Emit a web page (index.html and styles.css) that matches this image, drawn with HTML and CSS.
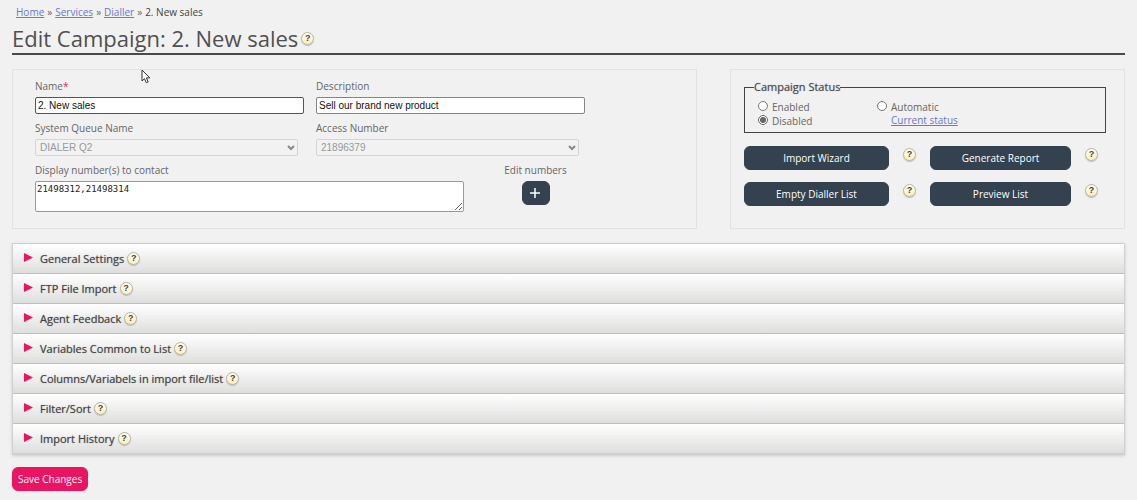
FILE: index.html
```html
<!DOCTYPE html>
<html lang="en">
<head>
<meta charset="utf-8">
<title>Edit Campaign</title>
<link rel="stylesheet" href="styles.css">
</head>
<body>
<nav class="breadcrumb"><a href="#">Home</a><span>»</span><a href="#">Services</a><span>»</span><a href="#">Dialler</a><span>»</span><span class="current">2. New sales</span></nav>
<header class="page-head">
  <h1>Edit Campaign: 2. New sales</h1>
  <button class="help" type="button">?</button>
</header>
<form class="campaign">
  <div class="panels">
    <section class="panel details-panel">
      <div class="field">
        <label for="name">Name<span class="required">*</span></label>
        <input class="text" id="name" type="text" value="2. New sales">
      </div>
      <div class="field">
        <label for="desc">Description</label>
        <input class="text light" id="desc" type="text" value="Sell our brand new product">
      </div>
      <div class="field">
        <label for="queue">System Queue Name</label>
        <div class="select-wrap">
          <select id="queue" disabled><option>DIALER Q2</option></select>
          <svg class="chevron" viewBox="0 0 8 6"><path d="M1 1l3 3 3-3"/></svg>
        </div>
      </div>
      <div class="field">
        <label for="access">Access Number</label>
        <div class="select-wrap">
          <select id="access" disabled><option>21896379</option></select>
          <svg class="chevron" viewBox="0 0 8 6"><path d="M1 1l3 3 3-3"/></svg>
        </div>
      </div>
      <div class="numbers">
        <div class="field">
          <label for="display">Display number(s) to contact</label>
          <textarea id="display">21498312,21498314</textarea>
        </div>
        <div class="edit-numbers">
          <label for="edit">Edit numbers</label>
          <button class="add" id="edit" type="button" aria-label="Edit numbers"><svg viewBox="0 0 12 12"><path d="M6 1v10M1 6h10"/></svg></button>
        </div>
      </div>
    </section>
    <section class="panel">
      <fieldset class="status">
        <legend>Campaign Status</legend>
        <div class="status-grid">
          <div class="radio"><input type="radio" name="status" id="enabled"><label for="enabled">Enabled</label></div>
          <div class="radio"><input type="radio" name="status" id="automatic"><label for="automatic">Automatic</label></div>
          <div class="radio"><input type="radio" name="status" id="disabled" checked><label for="disabled">Disabled</label></div>
          <a class="status-link" href="#">Current status</a>
        </div>
      </fieldset>
      <div class="actions">
        <button class="action" type="button">Import Wizard</button>
        <button class="help" type="button">?</button>
        <button class="action" type="button">Generate Report</button>
        <button class="help" type="button">?</button>
        <button class="action" type="button">Empty Dialler List</button>
        <button class="help" type="button">?</button>
        <button class="action" type="button">Preview List</button>
        <button class="help" type="button">?</button>
      </div>
    </section>
  </div>
  <div class="accordion">
    <details><summary><svg class="arrow" viewBox="0 0 9 9"><path d="M0 0l9 4.500L0 9z"/></svg><span>General Settings</span><button class="help" type="button">?</button></summary></details>
    <details><summary><svg class="arrow" viewBox="0 0 9 9"><path d="M0 0l9 4.500L0 9z"/></svg><span>FTP File Import</span><button class="help" type="button">?</button></summary></details>
    <details><summary><svg class="arrow" viewBox="0 0 9 9"><path d="M0 0l9 4.500L0 9z"/></svg><span>Agent Feedback</span><button class="help" type="button">?</button></summary></details>
    <details><summary><svg class="arrow" viewBox="0 0 9 9"><path d="M0 0l9 4.500L0 9z"/></svg><span>Variables Common to List</span><button class="help" type="button">?</button></summary></details>
    <details><summary><svg class="arrow" viewBox="0 0 9 9"><path d="M0 0l9 4.500L0 9z"/></svg><span>Columns/Variabels in import file/list</span><button class="help" type="button">?</button></summary></details>
    <details><summary><svg class="arrow" viewBox="0 0 9 9"><path d="M0 0l9 4.500L0 9z"/></svg><span>Filter/Sort</span><button class="help" type="button">?</button></summary></details>
    <details><summary><svg class="arrow" viewBox="0 0 9 9"><path d="M0 0l9 4.500L0 9z"/></svg><span>Import History</span><button class="help" type="button">?</button></summary></details>
  </div>
  <button class="save" type="submit">Save Changes</button>
</form>
<svg class="pointer" viewBox="0 0 10 15"><path d="M1 1v11l2.500-2.300 1.800 4 1.900-.8-1.800-4h3.400z"/></svg>
</body>
</html>
```
FILE: styles.css
```css
* { box-sizing: border-box; }

body {
  margin: 0;
  padding: 5px 12px 8px;
  background: #f1f1f1;
  color: #666;
  font: 10px/14px "Open Sans", sans-serif;
}

button, input, select, textarea { margin: 0; font: inherit; }

a { color: #6a78cf; }

.breadcrumb { display: flex; gap: 3px; padding: 0 4px; }
.breadcrumb .current { color: #444; }

.page-head {
  display: flex;
  align-items: center;
  gap: 3px;
  height: 36px;
  padding-top: 4px;
  border-bottom: 2px solid #4a4a4a;
}

h1 {
  margin: 0;
  color: #505050;
  font-size: 22px;
  line-height: 32px;
  font-weight: 400;
}

.help {
  flex: none;
  width: 13px;
  height: 13px;
  padding: 0;
  border: 1px solid #b9b4a0;
  border-radius: 50%;
  background: linear-gradient(#fffef2, #fdeebb);
  box-shadow: 0 1px 1px #bbb;
  color: #444;
  font: bold 9px/11px "Liberation Sans", sans-serif;
  text-align: center;
}

.panels {
  display: grid;
  grid-template-columns: 685fr 395fr;
  gap: 33px;
  margin-top: 14px;
}

.panel {
  border: 1px solid #e2e2e2;
  padding: 8px 18px 19px 13px;
}

.details-panel {
  display: grid;
  grid-template-columns: 269fr 269fr;
  align-content: start;
  gap: 7px 12px;
  padding: 9px 111px 16px 22px;
}

.field { display: flex; flex-direction: column; gap: 4px; }
.required { color: #f0284a; }

.text {
  width: 100%;
  height: 17px;
  padding: 0 2px;
  border: 1px solid #555;
  border-radius: 2px;
  background: #fff;
  color: #111;
  font: 10px/14px "Liberation Sans", sans-serif;
}
.text.light { border-color: #858585; }

.select-wrap { position: relative; margin-right: 6px; }

select {
  display: block;
  width: 100%;
  height: 17px;
  padding: 0 4px;
  appearance: none;
  border: 1px solid #d5d5d5;
  border-radius: 2px;
  background: #f2f2f2;
  color: #999;
  opacity: 1;
  font: 10px/14px "Liberation Sans", sans-serif;
}

.chevron {
  position: absolute;
  right: 3px;
  top: 6px;
  width: 8px;
  height: 6px;
  fill: none;
  stroke: #888;
  stroke-width: 2;
}

.numbers {
  grid-column: 1 / -1;
  display: grid;
  grid-template-columns: 429fr 121fr;
}

textarea {
  display: block;
  width: 100%;
  height: 31px;
  padding: 1px 1px 0;
  border: 1px solid #999;
  border-radius: 2px;
  background: #fff;
  color: #222;
  font: 9px/13px "DejaVu Sans Mono", monospace;
}

.edit-numbers {
  display: flex;
  flex-direction: column;
  align-items: center;
  gap: 4px;
  padding-left: 22px;
  white-space: nowrap;
}

.add {
  display: grid;
  place-items: center;
  width: 28px;
  height: 24px;
  padding: 0 2px 0 0;
  border: 1px solid #33424e;
  border-radius: 6px;
  background: #33424e;
}
.add svg { width: 12px; height: 12px; stroke: #fff; stroke-width: 1.5; }

.status {
  margin: 0;
  padding: 0 0 5px 13px;
  border: 1px solid #444;
}
.status legend {
  margin-left: -4px;
  padding: 0;
  color: #505050;
  font-size: 11px;
  line-height: 18px;
  font-weight: 500;
  text-shadow: 0 0 1px #888;
}

.status-grid {
  display: grid;
  grid-template-columns: 120fr 230fr;
  padding-top: 3px;
}
.radio { display: flex; align-items: center; gap: 4px; height: 14px; }
.radio label { padding-top: 1px; }
.radio input { width: 10px; height: 10px; accent-color: #666; }
.status-link { padding-left: 14px; }

.actions {
  display: grid;
  grid-template-columns: 145fr 13px 141fr 13px;
  column-gap: 14px;
  row-gap: 12px;
  padding-right: 8px;
  margin: 13px 0 0;
}
.actions .help { margin-top: 2px; }

.action, .save {
  height: 24px;
  border: 1px solid #33424e;
  border-radius: 6px;
  background: #33424e;
  color: #fff;
  line-height: 14px;
}

.accordion {
  margin-top: 14px;
  border: 1px solid #cfcfcf;
  border-bottom-width: 2px;
  box-shadow: 0 1px 3px #ccc;
}
.accordion details + details { border-top: 1px solid #bfbfbf; }
.accordion summary {
  display: flex;
  align-items: center;
  height: 29px;
  padding-left: 11px;
  background: linear-gradient(#fff, #dededd);
  color: #444;
  font-size: 11px;
  font-weight: 500;
  line-height: 16px;
  list-style: none;
  text-shadow: 0 0 1px #888;
}
.accordion .help { margin-left: 3px; text-shadow: none; }
.arrow { width: 9px; height: 9px; margin: 0 7px 2px 0; fill: #ea1463; }

.save {
  display: block;
  margin-top: 12px;
  padding: 0 5px;
  border-color: #ea1463;
  background: #ea1463;
}

.pointer {
  position: absolute;
  left: 141px;
  top: 69px;
  width: 10px;
  height: 15px;
  fill: #fff;
  stroke: #333;
  stroke-width: 1;
}
```
